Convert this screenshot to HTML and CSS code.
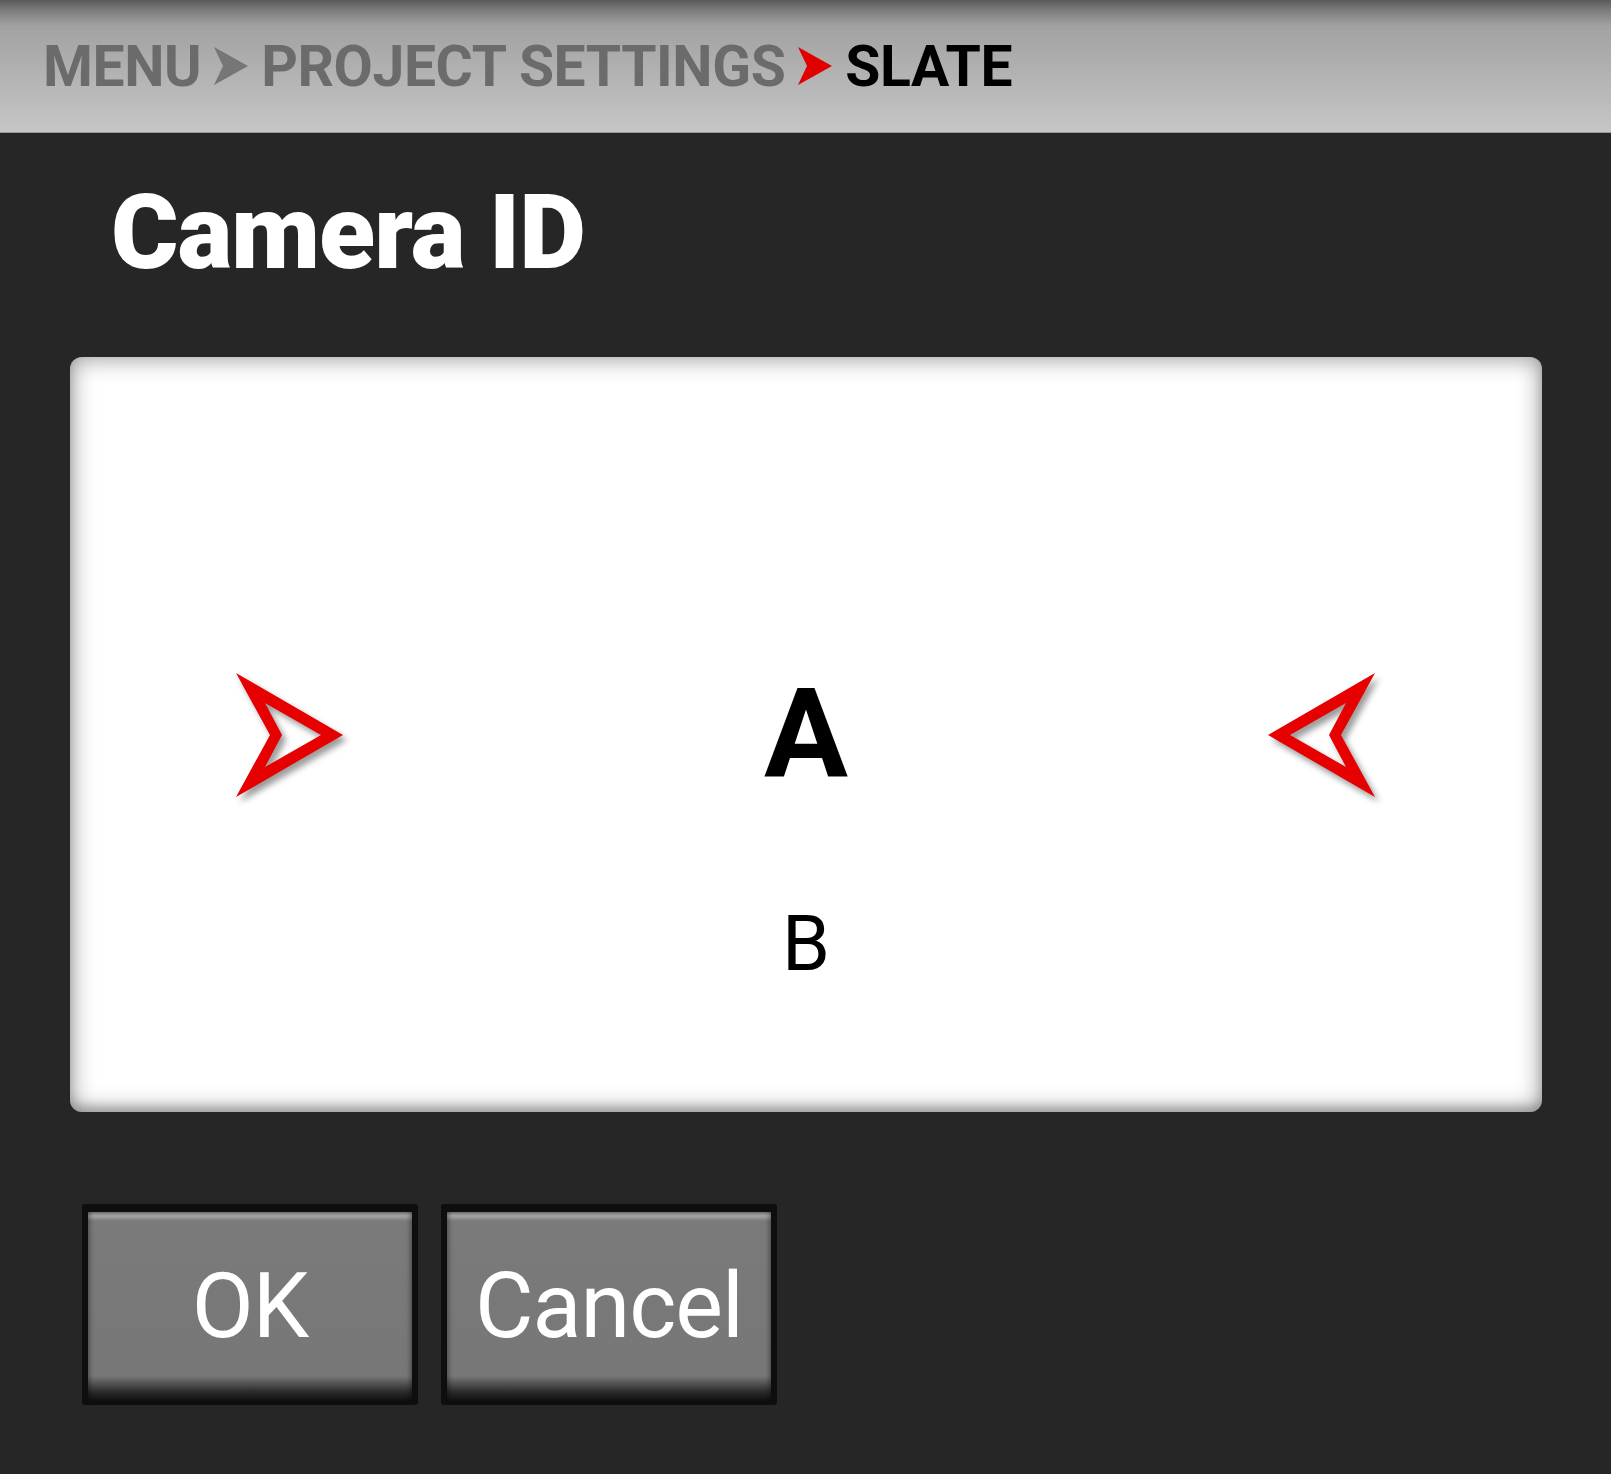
FILE: index.html
```html
<html lang="en">
<head>
  <meta charset="UTF-8">
  <meta name="viewport" content="width=device-width, initial-scale=1.0">
  <title>Slate - Camera ID</title>
  <link rel="stylesheet" href="styles.css">
</head>
<body>
  <header class="topbar">
    <nav class="crumbs">
      <span class="crumb">MENU</span>
      <svg class="sep" viewBox="0 0 34 38" width="34" height="38"><path d="M0 0 L34 19 L0 38 L9 19 Z" fill="#767676"/></svg>
      <span class="crumb">PROJECT SETTINGS</span>
      <svg class="sep" viewBox="0 0 34 38" width="34" height="38"><path d="M0 0 L34 19 L0 38 L9 19 Z" fill="#e00000"/></svg>
      <span class="crumb current">SLATE</span>
    </nav>
  </header>

  <main class="page">
    <h1 class="title">Camera ID</h1>

    <section class="picker">
      <div class="picker-row">
        <svg class="arrow" viewBox="0 0 108 124" width="108" height="124">
          <path fill-rule="evenodd" d="M0 0 L107 62 L0 124 L34 62 Z M29 30 L46 62 L29 94 L85 62 Z"/>
        </svg>
        <div class="value selected">A</div>
        <svg class="arrow" viewBox="0 0 108 124" width="108" height="124">
          <path fill-rule="evenodd" d="M107 0 L0 62 L107 124 L73 62 Z M78 30 L61 62 L78 94 L22 62 Z"/>
        </svg>
      </div>
      <div class="value next">B</div>
    </section>

    <div class="actions">
      <button class="btn">OK</button>
      <button class="btn">Cancel</button>
    </div>
  </main>
</body>
</html>
```

FILE: styles.css
```css
html{
  background: #262626;
}
body{
  margin: 0;
  font-family: Roboto, 'Liberation Sans', sans-serif;
}
.topbar{
  height: 132px;
  border-bottom: 1px solid #9a9a9a;
  background: linear-gradient(#5a5a5a 0, #7c7c7c 10px, #a2a2a2 26px, #c6c6c6 100%);
  display: flex;
  align-items: center;
}
.crumbs{
  display: flex;
  align-items: center;
  gap: 13px;
  padding-left: 43px;
}
.crumb{
  font-size: 57px;
  line-height: 1;
  font-weight: 700;
  color: #6b6b6b;
  letter-spacing: -0.4px;
}
.crumb.current{
  color: #000;
}
.sep{
  display: block;
}
.page{
  padding: 48px 69px 60px 70px;
}
.title{
  margin: 0 0 73px 41px;
  color: #fff;
  font-size: 103px;
  line-height: 1;
  font-weight: 900;
  letter-spacing: -1px;
}
.picker{
  height: 755px;
  box-sizing: border-box;
  padding-top: 315px;
  background: #fff;
  border-radius: 12px;
  box-shadow: inset 0 0 22px 3px rgba(0,0,0,.36), inset 0 -6px 10px rgba(0,0,0,.18);
}
.picker-row{
  display: flex;
  align-items: center;
  justify-content: space-between;
  padding: 0 166px;
}
.arrow{
  display: block;
  fill: #e60000;
  filter: drop-shadow(4px 5px 3px rgba(0,0,0,.4));
}
.value{
  text-align: center;
  line-height: 1;
  color: #000;
}
.selected{
  font-size: 125px;
  font-weight: 700;
}
.next{
  margin-top: 109px;
  font-size: 77px;
  font-weight: 400;
}
.actions{
  display: flex;
  gap: 23px;
  margin-top: 92px;
  padding-left: 12px;
}
.btn{
  width: 336px;
  height: 201px;
  box-sizing: border-box;
  border: 6px solid #0e0e0e;
  border-top-width: 8px;
  border-bottom-width: 4px;
  border-radius: 3px;
  padding: 0;
  background: linear-gradient(#7a7a7a 0, #a4a4a4 4px, #7a7a7a 9px, #777 164px, #2a2a2a 180px, #111 100%);
  box-shadow: inset 4px 0 4px -2px rgba(0,0,0,.35), inset -4px 0 4px -2px rgba(0,0,0,.35);
  color: #fff;
  font-family: Roboto, 'Liberation Sans', sans-serif;
  font-size: 90px;
  line-height: 1;
  letter-spacing: -1px;
  cursor: pointer;
}
```
